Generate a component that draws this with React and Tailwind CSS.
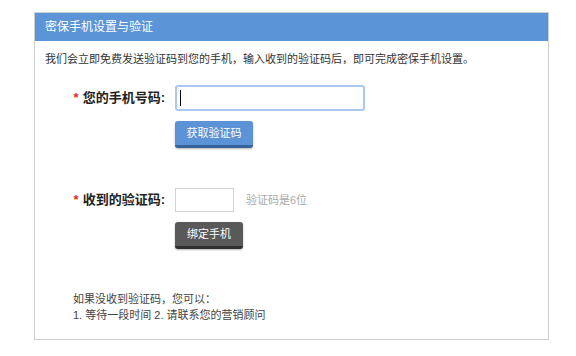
const FONT = { fontFamily: '"Liberation Sans", "Noto Sans CJK SC", sans-serif' };

function Label({ children }) {
  return (
    <div className="flex h-full items-center justify-end text-[13px] font-bold text-[#222]">
      <span className="mr-[4px] text-[13px] text-[#e02a2a]">*</span>
      {children}
    </div>
  );
}

export default function App() {
  return (
    <div className="h-[356px] w-[576px] bg-white pl-[34px] pt-[12px]" style={FONT}>
      <div className="h-[328px] w-[515px] border border-[#cfcfcf] bg-white">
        <div className="flex h-[28px] items-center bg-[#5b95d8] px-[10px] text-[12px] text-white">
          密保手机设置与验证
        </div>
        <p className="px-[10px] pt-[10px] text-[11px] leading-[16px] text-[#333]">
          我们会立即免费发送验证码到您的手机，输入收到的验证码后，即可完成密保手机设置。
        </p>

        <div className="mt-[18px] grid grid-cols-[130px_1fr] gap-x-[10px]">
          <div className="h-[26px]">
            <Label>您的手机号码:</Label>
          </div>
          <div>
            <div className="flex h-[26px] w-[190px] items-center rounded-[3px] border-2 border-[#a9c9f0] bg-white pl-[3px]">
              <span className="h-[16px] w-px bg-black" />
            </div>
            <button className="mt-[10px] h-[27px] w-[78px] rounded-[3px] border-b-[3px] border-[#35649b] bg-[#5b93d6] text-[11px] text-white shadow-[0_1px_2px_rgba(0,0,0,0.3)]">
              获取验证码
            </button>
          </div>

          <div className="mt-[40px] h-[24px]">
            <Label>收到的验证码:</Label>
          </div>
          <div className="mt-[40px]">
            <div className="flex items-center">
              <div className="h-[24px] w-[59px] border border-[#d4d4d4] bg-white" />
              <span className="ml-[12px] text-[11px] text-[#a8a8a8]">验证码是6位</span>
            </div>
            <button className="mt-[10px] h-[27px] w-[68px] rounded-[3px] border-b-[3px] border-[#2f2f2f] bg-[#595959] text-[11px] text-white shadow-[0_1px_2px_rgba(0,0,0,0.3)]">
              绑定手机
            </button>
          </div>
        </div>

        <div className="mt-[42px] pl-[38px] text-[11px] leading-[16px] text-[#444]">
          <p>如果没收到验证码，您可以：</p>
          <p>1. 等待一段时间 2. 请联系您的营销顾问</p>
        </div>
      </div>
    </div>
  );
}
